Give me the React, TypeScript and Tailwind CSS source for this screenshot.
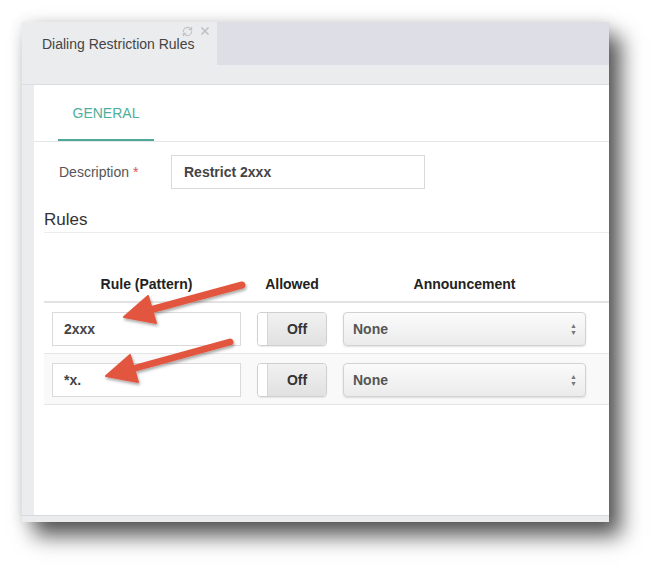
import React from 'react'
import { RefreshCw, X } from 'lucide-react'

const rules = [
  { pattern: '2xxx', allowed: false, announcement: 'None' },
  { pattern: '*x.', allowed: false, announcement: 'None' },
]

function Toggle({ on }: { on: boolean }) {
  return (
    <div className="flex h-[34px] w-[70px] overflow-hidden rounded-[4px] border border-[#cfcfcf] shadow-[0_1px_1px_rgba(0,0,0,0.08)]">
      <div className="w-[10px] border-r border-[#d6d6d6] bg-white" />
      <div className="flex flex-1 items-center justify-center bg-gradient-to-b from-[#f1f1f1] to-[#e1e1e1] text-[14px] font-bold text-[#333]">
        {on ? 'On' : 'Off'}
      </div>
    </div>
  )
}

function SelectBox({ value }: { value: string }) {
  return (
    <div className="flex h-[34px] w-[243px] items-center justify-between rounded-[4px] border border-[#d2d2d2] bg-gradient-to-b from-[#fbfbfb] to-[#ebebeb] pl-[9px] pr-[8px] shadow-[0_1px_2px_rgba(0,0,0,0.12)]">
      <span className="text-[14px] font-bold text-[#555]">{value}</span>
      <span className="flex flex-col items-center leading-none text-[#777]">
        <span className="text-[7px]">▲</span>
        <span className="text-[7px]">▼</span>
      </span>
    </div>
  )
}

function Arrow({ tail, tip, base, w1, w2 }: { tail: [number, number]; tip: [number, number]; base: [number, number]; w1: [number, number]; w2: [number, number] }) {
  return (
    <g>
      <line x1={tail[0]} y1={tail[1]} x2={base[0]} y2={base[1]} stroke="#e2573f" strokeWidth="7" strokeLinecap="round" />
      <polygon points={`${tip[0]},${tip[1]} ${w1[0]},${w1[1]} ${w2[0]},${w2[1]}`} fill="#e2573f" stroke="#e2573f" strokeWidth="2" strokeLinejoin="round" />
    </g>
  )
}

export default function App() {
  return (
    <div className="relative h-[569px] w-[655px] overflow-hidden bg-white font-['Liberation_Sans',Arial,sans-serif]">
      <div className="pl-[22px] pt-[22px]">
        <div className="flex h-[500px] w-[587px] flex-col bg-[#ebecee] shadow-[12px_14px_20px_rgba(0,0,0,0.65),0_0_14px_rgba(0,0,0,0.12)]">
          {/* tab strip */}
          <div className="flex h-[43px] bg-[#dedee6]">
            <div className="relative flex w-[195px] items-center bg-[#ebecee] pl-[20px] pt-[2px]">
              <span className="text-[14px] text-[#444]">Dialing Restriction Rules</span>
              <div className="absolute right-[6px] top-[3px] flex items-center gap-[6px] text-[#c2c2c6]">
                <RefreshCw size={11} strokeWidth={2.5} />
                <X size={12} strokeWidth={3.5} />
              </div>
            </div>
          </div>
          <div className="h-[20px] border-b border-[#dcdde0] bg-[#ebecee]" />

          {/* panel */}
          <div className="flex flex-1 flex-col pl-[12px]">
            <div className="flex-1 bg-white">
              <div className="flex h-[57px] border-b border-[#e6e6e6] pl-[24px]">
                <div className="flex w-[96px] items-center justify-center border-b-2 border-[#4fa99a] pt-[3px] text-[14px] text-[#4fae9c]">
                  GENERAL
                </div>
              </div>

              <div className="mt-[13px] flex items-center">
                <label className="w-[137px] pl-[25px] text-[14px] text-[#555]">
                  Description <span className="text-[#d9534f]">*</span>
                </label>
                <div className="flex h-[34px] w-[254px] items-center border border-[#dadada] pl-[12px] text-[14px] font-bold text-[#444]">
                  Restrict 2xxx
                </div>
              </div>

              <div className="ml-[10px] mt-[21px] border-b border-[#ececec] pb-[2px] text-[17px] leading-[20px] text-[#333]">
                Rules
              </div>

              <div className="ml-[10px] mt-[44px]">
                <div className="flex border-b-2 border-[#e2e2e2] pb-[9px] text-[14px] font-bold leading-[15px] text-[#222]">
                  <div className="w-[205px] text-center">Rule (Pattern)</div>
                  <div className="w-[86px] text-center">Allowed</div>
                  <div className="w-[259px] text-center">Announcement</div>
                </div>
                {rules.map((r, i) => (
                  <div key={i} className={`flex items-center border-b border-[#e6e6e6] pb-[7px] pt-[9px] ${i % 2 === 1 ? 'bg-[#f9f9f9]' : 'bg-white'}`}>
                    <div className="w-[205px] px-[8px]">
                      <div className="flex h-[34px] items-center border border-[#dadada] bg-white pl-[11px] text-[14px] font-bold text-[#444]">
                        {r.pattern}
                      </div>
                    </div>
                    <div className="flex w-[86px] justify-center">
                      <Toggle on={r.allowed} />
                    </div>
                    <div className="w-[259px] pl-[8px]">
                      <SelectBox value={r.announcement} />
                    </div>
                  </div>
                ))}
              </div>
            </div>
          </div>
          <div className="h-[7px] border-t border-[#d8d9dc] bg-[#ebecee]" />
        </div>
      </div>

      {/* annotation arrows */}
      <svg className="pointer-events-none absolute left-0 top-0" width="655" height="569">
        <defs>
          <filter id="sh" x="-20%" y="-20%" width="140%" height="140%">
            <feDropShadow dx="1" dy="2" stdDeviation="1.5" floodColor="#000" floodOpacity="0.35" />
          </filter>
        </defs>
        <g filter="url(#sh)">
          <Arrow tail={[242, 285]} tip={[124, 317]} base={[150, 310]} w1={[156, 323]} w2={[148, 296]} />
          <Arrow tail={[230, 342]} tip={[106, 376]} base={[132, 369]} w1={[138, 382]} w2={[130, 355]} />
        </g>
      </svg>
    </div>
  )
}
